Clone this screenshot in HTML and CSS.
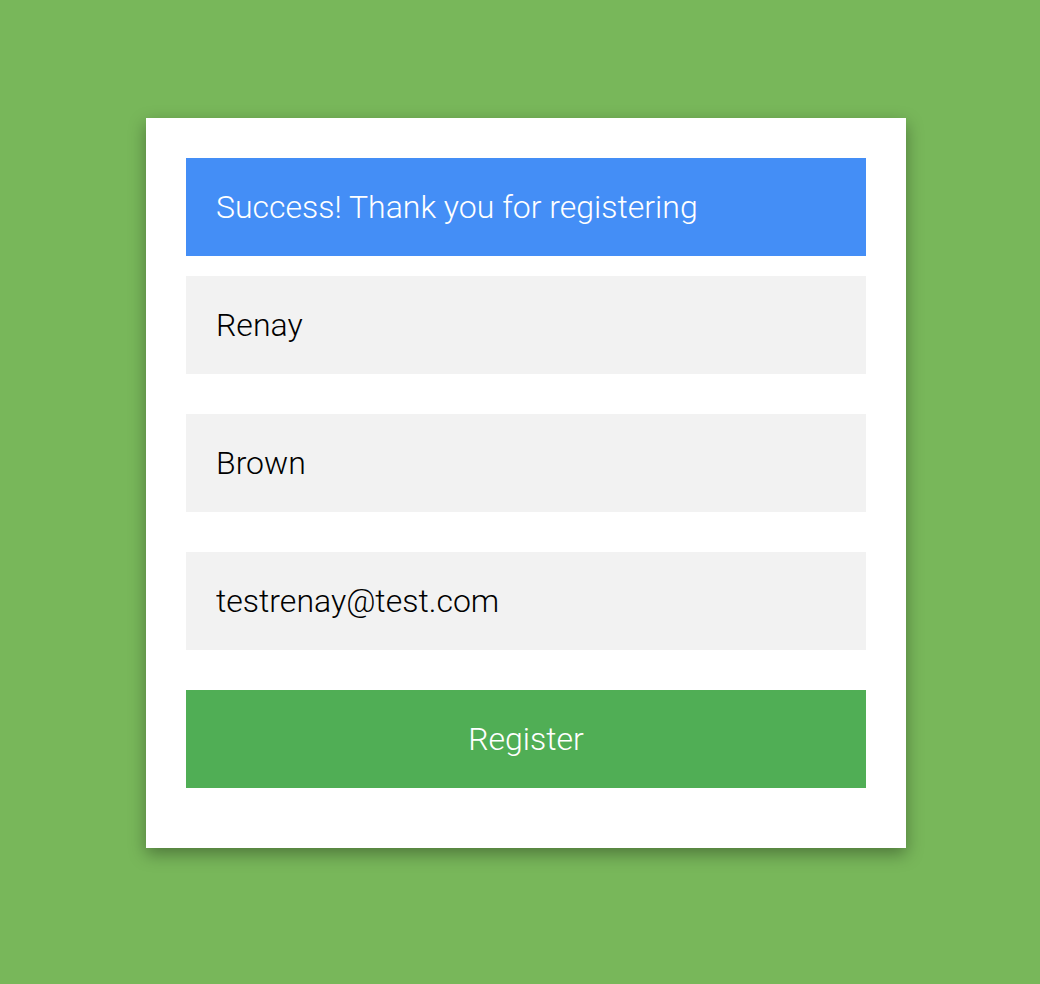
FILE: index.html
```html
<!DOCTYPE html>
<html>
<head>
<meta charset="utf-8">
<link rel="stylesheet" href="styles.css">
</head>
<body>
<div class="page">
  <form class="card">
    <div class="alert">Success! Thank you for registering</div>
    <input class="field field-first" type="text" value="Renay">
    <input class="field" type="text" value="Brown">
    <input class="field" type="text" value="testrenay@test.com">
    <button class="btn" type="button">Register</button>
  </form>
</div>
</body>
</html>
```
FILE: styles.css
```css
html, body {
  margin: 0;
  padding: 0;
}
body {
  background: #78b75a;
  font-family: Roboto, "Noto Sans", sans-serif;
  font-weight: 300;
}
.page {
  padding-top: 118px;
  padding-left: 12px;
  display: flex;
  justify-content: center;
  height: 866px;
}
.card {
  width: 760px;
  height: 730px;
  box-sizing: border-box;
  background: #fff;
  padding: 40px;
  display: flex;
  flex-direction: column;
  box-shadow: 0 6px 16px rgba(0, 0, 0, 0.35);
  margin: 0;
}
.alert {
  height: 98px;
  box-sizing: border-box;
  background: #448ef6;
  color: #fff;
  font-size: 32px;
  padding-left: 30px;
  display: flex;
  align-items: center;
}
.field {
  height: 98px;
  box-sizing: border-box;
  background: #f2f2f2;
  border: none;
  outline: none;
  margin: 0 0 40px 0;
  padding: 0 30px;
  font-family: Roboto, sans-serif;
  font-weight: 300;
  font-size: 32px;
  color: #000;
  width: 100%;
}
.field-first {
  margin-top: 20px;
}
.btn {
  height: 98px;
  border: none;
  background: #50ae55;
  color: #fff;
  font-family: Roboto, sans-serif;
  font-weight: 300;
  font-size: 32px;
  width: 100%;
  padding: 0;
}
```
